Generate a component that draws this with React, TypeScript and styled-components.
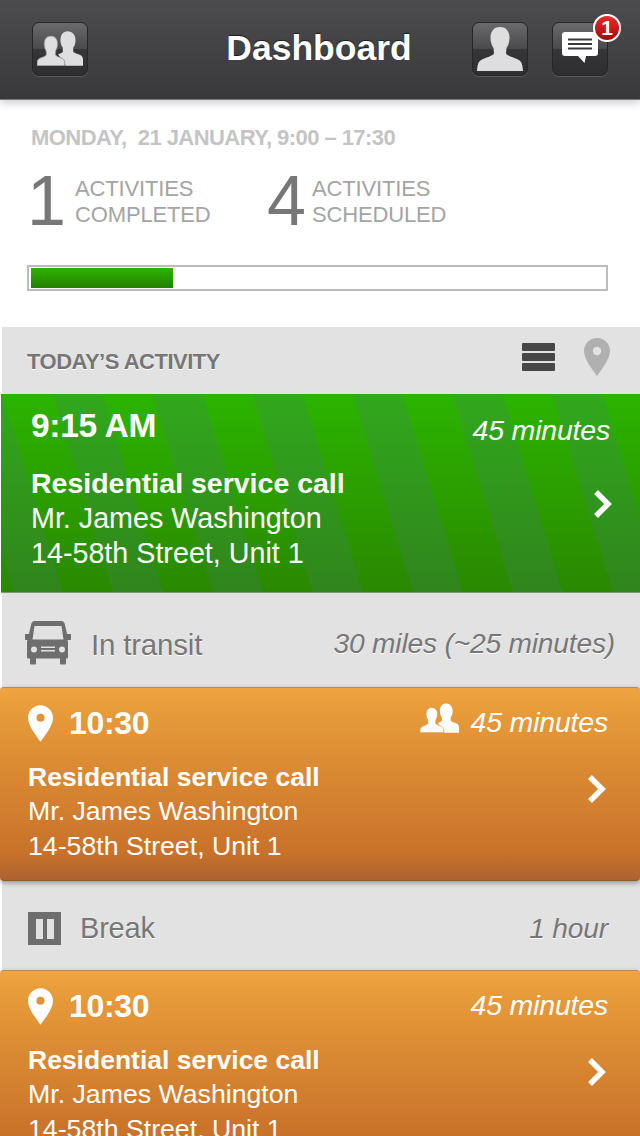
import React from 'react'
import styled, { createGlobalStyle } from 'styled-components'

const GlobalStyle = createGlobalStyle`
  html, body {
    margin: 0;
    padding: 0;
    background: #fff;
  }
  body {
    font-family: 'Liberation Sans', Arial, sans-serif;
  }
`

const Page = styled.div`
  width: 640px;
  height: 1136px;
  overflow: hidden;
  display: flex;
  flex-direction: column;
  background: #fff;
`

const Header = styled.header`
  flex: none;
  position: relative;
  z-index: 2;
  height: 100px;
  display: flex;
  align-items: center;
  padding: 0 32px 2px 32px;
  box-sizing: border-box;
  background: linear-gradient(#4c4c4e, #39393b);
  border-bottom: 1px solid #77777a;
  box-shadow: 0 3px 8px rgba(0, 0, 0, 0.2);
`

const HeaderTitle = styled.h1`
  flex: 1;
  margin: 0;
  padding-left: 78px;
  text-align: center;
  color: #fff;
  font-size: 35.5px;
  font-weight: 700;
  text-shadow: 0 -1px 1px rgba(0, 0, 0, 0.6);
`

const IconButton = styled.div<{ $gap?: number }>`
  position: relative;
  flex: none;
  width: 56px;
  height: 54px;
  box-sizing: border-box;
  margin-left: ${(p) => p.$gap ?? 0}px;
  border: 1px solid #262628;
  border-radius: 7px;
  display: flex;
  align-items: center;
  justify-content: center;
  background: linear-gradient(#6a6a6c 0%, #4a4a4c 50%, #363638 50%, #2e2e30 100%);
  box-shadow: 0 1px 0 rgba(255, 255, 255, 0.15);
`

const Badge = styled.div`
  position: absolute;
  top: -9px;
  right: -14px;
  width: 28px;
  height: 28px;
  box-sizing: border-box;
  border: 2px solid #fff;
  border-radius: 50%;
  background: linear-gradient(#ea2a2e, #a80808);
  color: #fff;
  font-size: 21px;
  font-weight: 700;
  line-height: 24px;
  text-align: center;
`

const Summary = styled.section`
  flex: none;
  height: 227px;
  box-sizing: border-box;
  padding: 26px 32px 0 27px;
`

const DateLine = styled.div`
  padding-left: 4px;
  color: #c4c4c4;
  font-size: 22px;
  font-weight: 700;
  line-height: 24px;
  letter-spacing: -0.55px;
  white-space: pre;
`

const Stats = styled.div`
  display: flex;
  margin-top: 18px;
  height: 66px;
`

const Stat = styled.div<{ $width: number }>`
  width: ${(p) => p.$width}px;
  display: flex;
  align-items: center;
`

const StatCount = styled.div<{ $width: number }>`
  width: ${(p) => p.$width}px;
  color: #777;
  font-size: 70px;
  line-height: 66px;
  letter-spacing: -1px;
`

const StatLabel = styled.div`
  margin-top: 2px;
  color: #a4a4a4;
  font-size: 22px;
  line-height: 26px;
  letter-spacing: -0.15px;
`

const Progress = styled.div`
  margin-top: 31px;
  width: 581px;
  height: 26px;
  box-sizing: border-box;
  border: 2px solid #bcbcbc;
  padding: 1px 2px;
  background: #fff;
`

const ProgressFill = styled.div`
  height: 100%;
  background: linear-gradient(#2eb400, #238000);
`

const Timeline = styled.main`
  flex: 1;
  margin-left: 2px;
  background: #e2e2e2;
  display: flex;
  flex-direction: column;
`

const SectionBar = styled.div`
  flex: none;
  height: 67px;
  box-sizing: border-box;
  display: flex;
  align-items: center;
  padding: 0 30px 0 25px;
`

const SectionTitle = styled.h2`
  flex: 1;
  margin: 2px 0 0;
  color: #767676;
  font-size: 22px;
  font-weight: 700;
  letter-spacing: -0.5px;
  text-shadow: 0 1px 0 #fff;
`

const SectionIcons = styled.div`
  display: flex;
  align-items: center;
  gap: 29px;
  margin-top: -8px;
`

const Card = styled.article<{ $tone: 'green' | 'orange' }>`
  flex: none;
  margin-left: ${(p) => (p.$tone === 'green' ? '-1px' : '-2px')};
  box-sizing: border-box;
  color: #fff;
  ${(p) =>
    p.$tone === 'green'
      ? `
    height: 199px;
    padding: 14px 30px 0 30px;
    border-bottom: 1px solid #7d9a74;
    background:
      repeating-linear-gradient(
        73deg,
        rgba(70, 120, 140, 0) 0 11.5px,
        rgba(70, 120, 140, 0.2) 11.5px 59.3px,
        rgba(70, 120, 140, 0) 59.3px 95.6px
      ),
      linear-gradient(#2cb400, #2a8800);
  `
      : `
    height: 194px;
    padding: 17px 32px 0 28px;
    border: 1px solid #b88c55;
    border-width: 1px 0;
    border-bottom-color: #8e5a2a;
    border-radius: 4px;
    background: linear-gradient(#f0a542 0%, #e89c3a 10%, #c9722a 85%, #ad6230 100%);
    box-shadow: 0 2px 5px rgba(0, 0, 0, 0.35);
    position: relative;
  `}
`

const CardTop = styled.div`
  display: flex;
  align-items: center;
  justify-content: space-between;
  height: 36px;
`

const TimeGroup = styled.div`
  display: flex;
  align-items: center;
  gap: 16px;
`

const TimeText = styled.div<{ $size: number }>`
  font-size: ${(p) => p.$size}px;
  font-weight: 700;
  line-height: 36px;
  letter-spacing: -0.3px;
`

const Duration = styled.div<{ $shift: number }>`
  display: flex;
  align-items: center;
  gap: 12px;
  margin-top: ${(p) => p.$shift}px;
  font-size: 28.5px;
  font-style: italic;
  line-height: 36px;
  letter-spacing: -0.2px;
`

const TeamMark = styled.span`
  display: flex;
  margin-top: -8px;
`

const CardBody = styled.div<{ $top: number }>`
  display: flex;
  align-items: flex-start;
  justify-content: space-between;
  margin-top: ${(p) => p.$top}px;
`

const CardTitle = styled.div<{ $size: number; $line: number }>`
  font-size: ${(p) => p.$size}px;
  font-weight: 700;
  line-height: ${(p) => p.$line}px;
`

const CardLine = styled.div<{ $size: number }>`
  font-size: ${(p) => p.$size}px;
  line-height: 34.5px;
`

const ChevronSlot = styled.div<{ $top: number; $right: number }>`
  display: flex;
  margin-top: ${(p) => p.$top}px;
  margin-right: ${(p) => p.$right}px;
`

const TransitRow = styled.div<{ $height: number; $right: number }>`
  flex: none;
  height: ${(p) => p.$height}px;
  box-sizing: border-box;
  display: flex;
  align-items: center;
  padding: 6px ${(p) => p.$right}px 0 23px;
  color: #777;
`

const TransitLabel = styled.div<{ $left: number; $size: number; $shift: number }>`
  flex: 1;
  margin-top: ${(p) => p.$shift}px;
  margin-left: ${(p) => p.$left}px;
  font-size: ${(p) => p.$size}px;
  letter-spacing: -0.2px;
  text-shadow: 0 1px 0 #fff;
`

const TransitNote = styled.div`
  font-size: 28.2px;
  font-style: italic;
  letter-spacing: -0.2px;
  text-shadow: 0 1px 0 #fff;
`

const PauseBox = styled.div`
  width: 33px;
  height: 33px;
  margin-left: 3px;
  background: #6e6e6e;
  display: flex;
  align-items: center;
  justify-content: center;
  gap: 4px;
`

const PauseBar = styled.span`
  width: 7px;
  height: 20px;
  background: #e2e2e2;
`

const SinglePerson = () => (
  <svg width="50" height="46" viewBox="0 0 50 46">
    <path
      d="M25 1c-6.5 0-9.5 5-9.5 10.5 0 4 1 7.5 3 10.5l.5 5.5c-1 2-6 3.5-11 5.5-4 1.6-5.5 4-6 12h46c-.5-8-2-10.4-6-12-5-2-10-3.5-11-5.5l.5-5.5c2-3 3-6.5 3-10.5C34.5 6 31.5 1 25 1z"
      fill="#dedede"
    />
  </svg>
)

const PeopleIcon = ({ width, height, fill, seam }: { width: number; height: number; fill: string; seam: string }) => (
  <svg width={width} height={height} viewBox="0 0 48 36">
    <path
      d="M32 0c-5 0-7.5 4-7.5 9 0 3 .8 6 2.3 8l.2 4c-.5 1.5-3 2.3-5 3L30 36h18v-6c0-3-1-4.5-3.5-5.5-3-1.2-6-2-6.8-3.5l.2-4c1.5-2 2.3-5 2.3-8C40.2 4 37 0 32 0z"
      fill={fill}
    />
    <path
      d="M14.5 5c-4.5 0-7 3.5-7 8 0 3 .8 5.5 2 7.5l.2 4c-.5 1.3-2.5 2-5 3C1.5 28.5 0 30 0 33v3h29v-3c0-3-1.5-4.5-4.7-5.5-2.5-1-4.5-1.7-5-3l.2-4c1.2-2 2-4.5 2-7.5 0-4.5-2.5-8-7-8z"
      fill={fill}
      stroke={seam}
      strokeWidth="0.8"
    />
  </svg>
)

const ChatIcon = () => (
  <svg width="36" height="36" viewBox="0 0 36 36">
    <path d="M3 1h30a3 3 0 0 1 3 3v18a3 3 0 0 1-3 3h-9l-1.5 7-6.5-7H3a3 3 0 0 1-3-3V4a3 3 0 0 1 3-3z" fill="#fff" />
    <path d="M6 8.500h24M6 13h24M6 17.500h24" stroke="#3a3a3c" strokeWidth="2.2" />
  </svg>
)

const ListIcon = () => (
  <svg width="33" height="28" viewBox="0 0 33 28">
    <rect x="0" y="0" width="33" height="8" rx="1" fill="#474747" />
    <rect x="0" y="10" width="33" height="8" rx="1" fill="#474747" />
    <rect x="0" y="20" width="33" height="8" rx="1" fill="#474747" />
  </svg>
)

const PinIcon = ({ width, height, fill, hole }: { width: number; height: number; fill: string; hole: string }) => (
  <svg width={width} height={height} viewBox="0 0 26 38">
    <path d="M13 0C5.8 0 0 5.8 0 13c0 8 8 18 13 25 5-7 13-17 13-25C26 5.8 20.2 0 13 0z" fill={fill} />
    <circle cx="13" cy="13" r="4.2" fill={hole} />
  </svg>
)

const VanIcon = () => (
  <svg width="46" height="44" viewBox="0 0 46 44">
    <path
      fillRule="evenodd"
      d="M10 0h26c2.5 0 3.5 1.5 4 4l2 9h3c.6 0 1 .4 1 1v4c0 .6-.4 1-1 1h-2.500l.5 2v15c0 1-.5 1.5-1.5 1.5H41v4.500c0 1-.6 1.500-1.500 1.500h-3c-1 0-1.500-.5-1.500-1.500V37.500H11V42c0 1-.5 1.500-1.500 1.500h-3C5.600 43.500 5 43 5 42v-4.500H3.500C2.500 37.500 2 37 2 36V21l.5-2H1c-.6 0-1-.4-1-1v-4c0-.6.4-1 1-1h3l2-9c.5-2.500 1.500-4 4-4zM9.500 5L7.500 18.500h31L36.500 5zM9 25.500a3 3 0 1 0 0 6 3 3 0 0 0 0-6zm28 0a3 3 0 1 0 0 6 3 3 0 0 0 0-6zM16 25.500v1.500h14v-1.500zm0 3.500v1.500h14V29z"
      fill="#6e6e6e"
    />
  </svg>
)

const Chevron = () => (
  <svg width="20" height="30" viewBox="0 0 20 30">
    <path d="M3 3l12 12L3 27" fill="none" stroke="#fff" strokeWidth="5.5" />
  </svg>
)

const Visit = ({ withPeople }: { withPeople?: boolean }) => (
  <Card $tone="orange">
    <CardTop>
      <TimeGroup>
        <PinIcon width={25} height={37} fill="#fff" hole="#e0943a" />
        <TimeText $size={32}>10:30</TimeText>
      </TimeGroup>
      <Duration $shift={-2}>
        {withPeople && (
          <TeamMark>
            <PeopleIcon width={39} height={30} fill="#fff" seam="#df9238" />
          </TeamMark>
        )}
        45 minutes
      </Duration>
    </CardTop>
    <CardBody $top={19}>
      <div>
        <CardTitle $size={26.5} $line={34}>
          Residential service call
        </CardTitle>
        <CardLine $size={26.7}>Mr. James Washington</CardLine>
        <CardLine $size={26.7}>14-58th Street, Unit 1</CardLine>
      </div>
      <ChevronSlot $top={14} $right={1}>
        <Chevron />
      </ChevronSlot>
    </CardBody>
  </Card>
)

export default function App() {
  return (
    <Page>
      <GlobalStyle />
      <Header>
        <IconButton>
          <PeopleIcon width={46} height={35} fill="#dedede" seam="#8a8a8a" />
        </IconButton>
        <HeaderTitle>Dashboard</HeaderTitle>
        <IconButton>
          <SinglePerson />
        </IconButton>
        <IconButton $gap={24}>
          <ChatIcon />
          <Badge>1</Badge>
        </IconButton>
      </Header>

      <Summary>
        <DateLine>{'MONDAY,  21 JANUARY, 9:00 – 17:30'}</DateLine>
        <Stats>
          <Stat $width={240}>
            <StatCount $width={48}>1</StatCount>
            <StatLabel>
              ACTIVITIES
              <br />
              COMPLETED
            </StatLabel>
          </Stat>
          <Stat $width={240}>
            <StatCount $width={45}>4</StatCount>
            <StatLabel>
              ACTIVITIES
              <br />
              SCHEDULED
            </StatLabel>
          </Stat>
        </Stats>
        <Progress>
          <ProgressFill style={{ width: `${(142 / 573) * 100}%` }} />
        </Progress>
      </Summary>

      <Timeline>
        <SectionBar>
          <SectionTitle>TODAY’S ACTIVITY</SectionTitle>
          <SectionIcons>
            <ListIcon />
            <PinIcon width={26} height={38} fill="#b0b0b0" hole="#e2e2e2" />
          </SectionIcons>
        </SectionBar>

        <Card $tone="green">
          <CardTop>
            <TimeText $size={33.5}>9:15 AM</TimeText>
            <Duration $shift={8}>45 minutes</Duration>
          </CardTop>
          <CardBody $top={21}>
            <div>
              <CardTitle $size={28.5} $line={36}>
                Residential service call
              </CardTitle>
              <CardLine $size={28.7}>Mr. James Washington</CardLine>
              <CardLine $size={28.7}>14-58th Street, Unit 1</CardLine>
            </div>
            <ChevronSlot $top={24} $right={-3}>
              <Chevron />
            </ChevronSlot>
          </CardBody>
        </Card>

        <TransitRow $height={94} $right={25}>
          <VanIcon />
          <TransitLabel $left={20} $size={29.5} $shift={3}>
            In transit
          </TransitLabel>
          <TransitNote>30 miles (~25 minutes)</TransitNote>
        </TransitRow>

        <Visit withPeople />

        <TransitRow $height={89} $right={32}>
          <PauseBox>
            <PauseBar />
            <PauseBar />
          </PauseBox>
          <TransitLabel $left={19} $size={29} $shift={-1}>
            Break
          </TransitLabel>
          <TransitNote>1 hour</TransitNote>
        </TransitRow>

        <Visit />
      </Timeline>
    </Page>
  )
}
